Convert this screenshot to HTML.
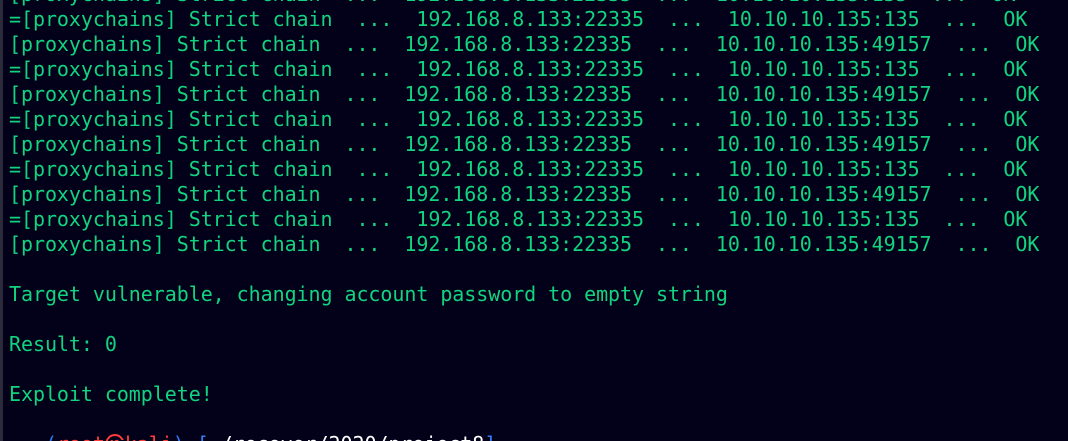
<!DOCTYPE html>
<html><head><meta charset="utf-8"><style>
html,body{margin:0;padding:0;width:1068px;height:441px;overflow:hidden;background:#03011a;}
body{position:relative;}
.strip{position:absolute;left:0;top:0;width:3px;height:441px;background:#2a2a3a;}
pre{position:absolute;left:9px;top:-18px;margin:0;font-family:"DejaVu Sans Mono","Liberation Mono",monospace;font-size:20px;letter-spacing:-0.06px;line-height:25px;color:#12d37f;white-space:pre;}
.r{color:#ff3b3b}.b{color:#2e7df5}
</style></head><body><div class="strip"></div>
<pre>[proxychains] Strict chain  ...  192.168.8.133:22335  ...  10.10.10.135:135  ...  OK
=[proxychains] Strict chain  ...  192.168.8.133:22335  ...  10.10.10.135:135  ...  OK
[proxychains] Strict chain  ...  192.168.8.133:22335  ...  10.10.10.135:49157  ...  OK
=[proxychains] Strict chain  ...  192.168.8.133:22335  ...  10.10.10.135:135  ...  OK
[proxychains] Strict chain  ...  192.168.8.133:22335  ...  10.10.10.135:49157  ...  OK
=[proxychains] Strict chain  ...  192.168.8.133:22335  ...  10.10.10.135:135  ...  OK
[proxychains] Strict chain  ...  192.168.8.133:22335  ...  10.10.10.135:49157  ...  OK
=[proxychains] Strict chain  ...  192.168.8.133:22335  ...  10.10.10.135:135  ...  OK
[proxychains] Strict chain  ...  192.168.8.133:22335  ...  10.10.10.135:49157  ...  OK
=[proxychains] Strict chain  ...  192.168.8.133:22335  ...  10.10.10.135:135  ...  OK
[proxychains] Strict chain  ...  192.168.8.133:22335  ...  10.10.10.135:49157  ...  OK

Target vulnerable, changing account password to empty string

Result: 0

Exploit complete!

<span class="b">┌──(</span><span class="r">root㉿kali</span><span class="b">)-[</span><span style="color:#fff">~/recover/2020/project8</span><span class="b">]</span></pre>
</body></html>
